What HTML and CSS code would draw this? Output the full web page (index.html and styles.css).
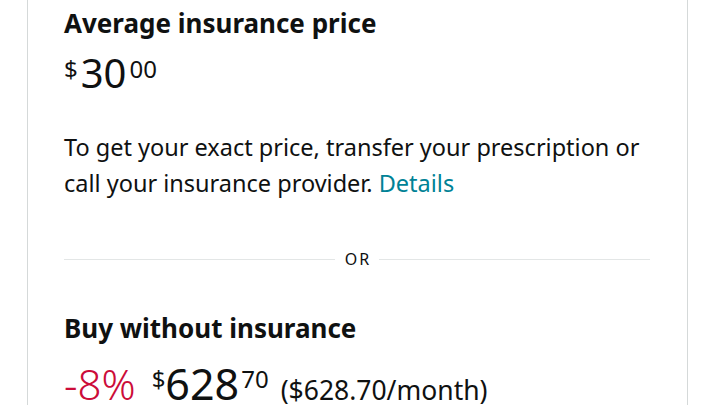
FILE: index.html
```html
<!DOCTYPE html>
<html lang="en">
<head>
    <meta charset="UTF-8">
    <meta name="viewport" content="width=device-width, initial-scale=1.0">
    <title>Insurance price</title>
    <link rel="stylesheet" href="styles.css">
</head>
<body>
    <div class="card">
        <section class="block">
            <h2 class="block-title">Average insurance price</h2>
            <div class="price price-insured">
                <span class="price-sym">$</span><span class="price-whole">30</span><span class="price-frac">00</span>
            </div>
            <p class="note">To get your exact price, transfer your prescription or call your insurance provider. <a class="link" href="#">Details</a></p>
        </section>

        <div class="divider"><span>OR</span></div>

        <section class="block">
            <h2 class="block-title">Buy without insurance</h2>
            <div class="price price-cash">
                <span class="saving">-8%</span>
                <span class="price-sym">$</span><span class="price-whole">628</span><span class="price-frac">70</span>
                <span class="per-month">($628.70/month)</span>
            </div>
        </section>
    </div>
</body>
</html>
```

FILE: styles.css
```css
body {
    margin: 0;
    background: #ffffff;
    font-family: 'Noto Sans', 'Open Sans', sans-serif;
    color: #0f1111;
}

.card {
    margin: 0 32px 0 27px;
    border-left: 1px solid #d5d9d9;
    border-right: 1px solid #d5d9d9;
    padding: 6px 37px 0 36px;
    min-height: 405px;
    box-sizing: border-box;
}

.block-title {
    margin: 0;
    font-size: 26px;
    font-weight: 700;
    line-height: 34px;
}

.price {
    display: flex;
    align-items: flex-start;
    line-height: 1;
}

.price-sym,
.price-frac {
    font-size: 24px;
    margin-top: 4px;
}

.saving,
.price-whole,
.per-month {
    align-self: baseline;
}

/* first price row */
.price-insured {
    margin-top: 13px;
}

.price-insured .price-whole {
    font-size: 40px;
    margin: 0 3px;
}

/* second price row */
.price-cash {
    margin-top: 17px;
}

.price-cash .price-sym,
.price-cash .price-frac {
    margin-top: 5px;
}

.price-cash .price-whole {
    font-size: 43px;
    margin: 0 2px 0 0;
}

.saving {
    color: #cc0c39;
    font-size: 42px;
    font-weight: 300;
    margin-right: 16px;
}

.per-month {
    font-size: 26.5px;
    margin-left: 12px;
}

.note {
    margin: 36px 0 0 0;
    font-size: 23.5px;
    line-height: 36px;
}

.link {
    color: #008296;
    text-decoration: none;
}

.divider {
    display: flex;
    align-items: center;
    gap: 10px;
    margin: 48px 0 42px 0;
    font-size: 16px;
    line-height: 20px;
    letter-spacing: 2px;
}

.divider span {
    margin-right: -2px;
}

.divider::before,
.divider::after {
    content: "";
    flex: 1;
    border-top: 1px solid #e3e6e6;
}
```
